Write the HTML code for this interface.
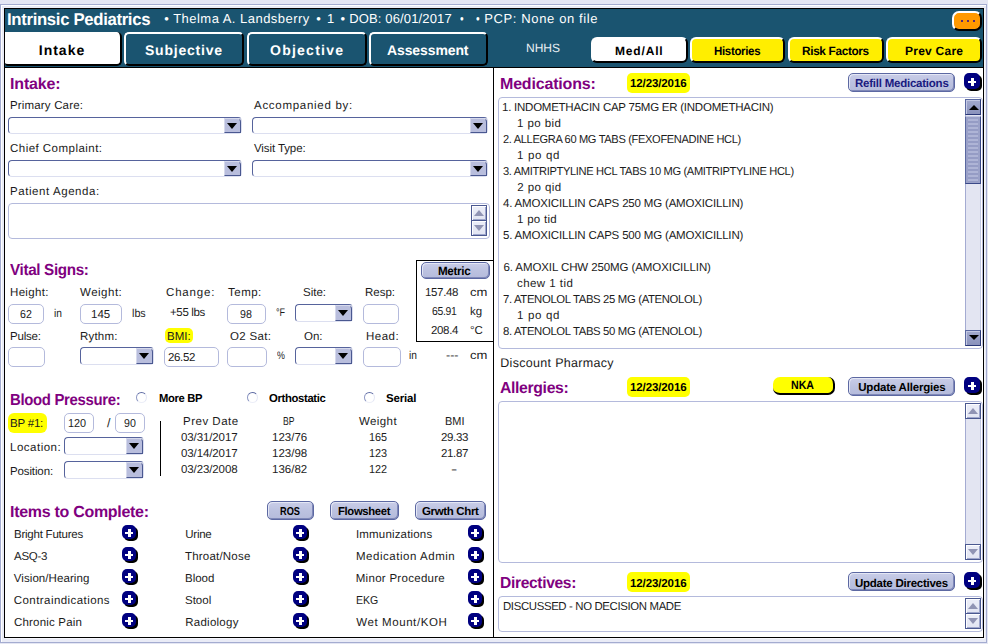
<!DOCTYPE html>
<html><head><meta charset="utf-8"><title>Intrinsic Pediatrics</title>
<style>
html,body{margin:0;padding:0}
body{width:988px;height:644px;overflow:hidden;position:relative;background:#e4e6f3;font-family:"Liberation Sans",sans-serif}
div,span,i,b{position:absolute;box-sizing:border-box;display:block}
.t{white-space:pre;line-height:20px;font-style:normal;text-rendering:geometricPrecision}
.outer{border:1px solid #a4acd0;background:#e9ebf6;box-shadow:inset 1px 1px 0 #fff}
.frame{border:1px solid #000;background:#fff;box-shadow:1px 1px 0 #f6f7fc}
.hdr{background:#1a5470}
.hl,.vl{background:#000}
.tab{border:2px solid;border-color:#fff #000 #000 #fff;border-radius:5px;background:#1a5470}
.tab.w{background:#fff}
.tab.y{background:#ffee00}
.org{border:2px solid;border-color:#fff #000 #000 #fff;border-radius:7px;background:#ff9900}
.org i{width:1.6px;height:1.6px;background:#5a2a70;top:7.2px}
.in{border:1px solid #b4badc;border-radius:5px;background:#fff}
.dd{border:1px solid;border-color:#56639c #dcdff0 #dcdff0 #56639c;border-radius:4px;background:#fff}
.dd b{right:0;top:0;bottom:0;width:17px;background:#b9bedd;border:1px solid;border-color:#d6d9ec #4a5890 #4a5890 #d6d9ec;border-top-right-radius:4px}
.dd b:after{content:"";position:absolute;left:1.6px;top:3.6px;width:0;height:0;border-left:5.8px solid transparent;border-right:5.8px solid transparent;border-top:6.2px solid #000}
.btn{border:1px solid #5c68a2;border-radius:5px;background:linear-gradient(#c9cde8,#bcc2e0 50%,#b5bbdb);box-shadow:inset 1px 1px 0 #e4e7f5,inset -1px -1px 0 #7f88b8}
.plus{border-radius:5px;background:#000080;box-shadow:2px 2px 0 #000}
.plus:before{content:"";position:absolute;left:calc(50% - 4px);top:calc(50% - 0.3px);width:8.4px;height:2.6px;background:#fff}
.plus:after{content:"";position:absolute;left:calc(50% - 1.3px);top:calc(50% - 3px);width:3px;height:8px;background:#fff}
.pill{background:#ffff00;border-radius:5px}
.nka{background:#ffff00;border-radius:7px;border:solid #000;border-width:0 2px 2px 0}
.lb{border:1px solid #b4badc;border-radius:4px;background:#fff}
.trk{background:#e3e5f2;border-left:1px solid #a4abd2;border-right:1px solid #c4c9e4}
.sbtn{border:1px solid #4a5890;background:linear-gradient(#eceef8,#e1e4f2);box-shadow:inset 1px 1px 0 #fdfdff,inset -1px -1px 0 #9ea6cc}
.sbtn.a{background:linear-gradient(#a3aace,#8a92bc);box-shadow:inset 1px 1px 0 #c4c9e4;border-color:#5a68a0 #2a3878 #2a3878 #5a68a0;border-bottom-width:1px}
.sbtn i{left:2px;width:0;height:0;border-left:5.5px solid transparent;border-right:5.5px solid transparent}
.up i{top:4px;border-bottom:6px solid #9094b4}
.dn i{top:4px;border-top:6px solid #9094b4}
.a.up i{border-bottom-color:#000;left:2.5px;top:4.5px;border-left-width:5px;border-right-width:5px;border-bottom-width:5.5px}
.a.dn i{border-top-color:#000;left:2.5px;border-left-width:5px;border-right-width:5px;border-top-width:5.5px;top:4px}
.thumb{border:1px solid;border-color:#c0c5e2 #3a4888 #3a4888 #5a68a0;background:#9aa1c8}
.thumb i{left:2px;right:2px;top:2px;bottom:1px;background:repeating-linear-gradient(#aeb4d6 0,#aeb4d6 2px,#959cc5 2px,#959cc5 4px)}
.radio{border-radius:50%;border:1.4px solid;border-color:#5f6ca4 #e4e7f5 #eceef8 #8f99c4;background:#fff}
.mbox{border:1px solid #000;border-right:none;background:#fff}
</style></head>
<body>
<div class="outer" style="left:0px;top:4px;width:987px;height:639px;"></div>
<div class="frame" style="left:4px;top:8px;width:980px;height:630px;"></div>
<div class="hdr" style="left:5px;top:9px;width:978px;height:58px;"></div>
<div class="hl" style="left:5px;top:67px;width:978px;height:1px;"></div>
<div class="vl" style="left:493px;top:67px;width:1px;height:570px;"></div>
<div class="tab w" style="left:5px;top:32px;width:117px;height:34px;border-left:none;border-top:none;border-radius:0 5px 5px 3px"></div>
<div class="tab" style="left:124px;top:32px;width:120px;height:34px;"></div>
<div class="tab" style="left:247px;top:32px;width:120px;height:34px;"></div>
<div class="tab" style="left:369px;top:32px;width:119px;height:34px;"></div>
<div class="tab w" style="left:591px;top:37px;width:97px;height:26px;border-radius:6px"></div>
<div class="tab y" style="left:690px;top:37px;width:95px;height:26px;border-radius:6px"></div>
<div class="tab y" style="left:787.5px;top:37px;width:96px;height:26px;border-radius:6px"></div>
<div class="tab y" style="left:886px;top:37px;width:96px;height:26px;border-radius:6px"></div>
<div class="org" style="left:952px;top:11px;width:30px;height:20px;"><i style="left:7px"></i><i style="left:13px"></i><i style="left:19px"></i></div>
<div class="dd" style="left:8px;top:117px;width:234px;height:17px;"><b></b></div>
<div class="dd" style="left:8px;top:160px;width:234px;height:17px;"><b></b></div>
<div class="dd" style="left:252px;top:117px;width:236px;height:17px;"><b></b></div>
<div class="dd" style="left:252px;top:160px;width:236px;height:17px;"><b></b></div>
<div class="lb" style="left:8px;top:203px;width:482px;height:36px;"></div>
<div class="sbtn up" style="left:471px;top:205px;width:16px;height:15.5px;"><i></i></div>
<div class="sbtn dn" style="left:471px;top:220.5px;width:16px;height:15.5px;border-top:none"><i></i></div>
<div class="in" style="left:8px;top:304px;width:36px;height:20px;"></div>
<div class="in" style="left:80px;top:304px;width:42px;height:20px;"></div>
<div class="in" style="left:227px;top:304px;width:39px;height:20px;"></div>
<div class="dd" style="left:295px;top:304px;width:58px;height:18px;"><b></b></div>
<div class="in" style="left:363px;top:304px;width:36px;height:20px;"></div>
<div class="mbox" style="left:416px;top:260px;width:77px;height:82px;"></div>
<div class="btn" style="left:421px;top:262px;width:69px;height:17px;"></div>
<div class="pill" style="left:165px;top:328px;width:28px;height:15px;"></div>
<div class="in" style="left:8px;top:347px;width:37px;height:20px;"></div>
<div class="dd" style="left:80px;top:347px;width:74px;height:18px;"><b></b></div>
<div class="in" style="left:164px;top:347px;width:55px;height:20px;"></div>
<div class="in" style="left:227px;top:347px;width:40px;height:20px;"></div>
<div class="dd" style="left:295px;top:347px;width:58px;height:18px;"><b></b></div>
<div class="in" style="left:363px;top:347px;width:38px;height:20px;"></div>
<div class="radio" style="left:136px;top:392px;width:11px;height:11px;"></div>
<div class="radio" style="left:247px;top:392px;width:11px;height:11px;"></div>
<div class="radio" style="left:364px;top:392px;width:11px;height:11px;"></div>
<div class="pill" style="left:8px;top:413px;width:39px;height:20px;border-radius:6px"></div>
<div class="in" style="left:64px;top:413px;width:30px;height:20px;"></div>
<div class="in" style="left:115px;top:413px;width:30px;height:20px;"></div>
<div class="dd" style="left:64px;top:437px;width:80px;height:18px;"><b></b></div>
<div class="dd" style="left:64px;top:461px;width:80px;height:18px;"><b></b></div>
<div class="" style="left:160px;top:421px;width:1px;height:55px;background:#000"></div>
<div class="btn" style="left:267px;top:501px;width:47px;height:19px;"></div>
<div class="btn" style="left:330px;top:501px;width:69px;height:19px;"></div>
<div class="btn" style="left:415px;top:501px;width:71px;height:19px;"></div>
<div class="plus" style="left:122px;top:525px;width:14px;height:14px;"></div>
<div class="plus" style="left:293px;top:525px;width:14px;height:14px;"></div>
<div class="plus" style="left:468px;top:525px;width:14px;height:14px;"></div>
<div class="plus" style="left:122px;top:547px;width:14px;height:14px;"></div>
<div class="plus" style="left:293px;top:547px;width:14px;height:14px;"></div>
<div class="plus" style="left:468px;top:547px;width:14px;height:14px;"></div>
<div class="plus" style="left:122px;top:569px;width:14px;height:14px;"></div>
<div class="plus" style="left:293px;top:569px;width:14px;height:14px;"></div>
<div class="plus" style="left:468px;top:569px;width:14px;height:14px;"></div>
<div class="plus" style="left:122px;top:591px;width:14px;height:14px;"></div>
<div class="plus" style="left:293px;top:591px;width:14px;height:14px;"></div>
<div class="plus" style="left:468px;top:591px;width:14px;height:14px;"></div>
<div class="plus" style="left:122px;top:613px;width:14px;height:14px;"></div>
<div class="plus" style="left:293px;top:613px;width:14px;height:14px;"></div>
<div class="plus" style="left:468px;top:613px;width:14px;height:14px;"></div>
<div class="pill" style="left:627px;top:73px;width:63px;height:20px;"></div>
<div class="btn" style="left:848px;top:73px;width:107px;height:19px;"></div>
<div class="plus" style="left:964px;top:73px;width:16px;height:16px;"></div>
<div class="pill" style="left:627px;top:377px;width:63px;height:20px;"></div>
<div class="btn" style="left:848px;top:377px;width:107px;height:19px;"></div>
<div class="plus" style="left:964px;top:377px;width:16px;height:16px;"></div>
<div class="pill" style="left:627px;top:572px;width:63px;height:20px;"></div>
<div class="btn" style="left:848px;top:572px;width:107px;height:19px;"></div>
<div class="plus" style="left:964px;top:572px;width:16px;height:16px;"></div>
<div class="nka" style="left:773px;top:377px;width:62px;height:18px;"></div>
<div class="lb" style="left:498px;top:97px;width:485px;height:252px;"></div>
<div class="trk" style="left:965px;top:99px;width:16px;height:247px;"></div>
<div class="sbtn up a" style="left:965px;top:99px;width:16px;height:16px;"><i></i></div>
<div class="sbtn dn a" style="left:965px;top:330px;width:16px;height:16px;"><i></i></div>
<div class="thumb" style="left:965px;top:116px;width:16px;height:68px;"><i></i></div>
<div class="lb" style="left:498px;top:401px;width:485px;height:162px;"></div>
<div class="trk" style="left:965px;top:403px;width:16px;height:157px;"></div>
<div class="sbtn up" style="left:965px;top:403px;width:16px;height:16px;"><i></i></div>
<div class="sbtn dn" style="left:965px;top:544px;width:16px;height:16px;"><i></i></div>
<div class="lb" style="left:498px;top:596px;width:485px;height:36px;"></div>
<div class="sbtn up" style="left:965px;top:598px;width:16px;height:15.5px;"><i></i></div>
<div class="sbtn dn" style="left:965px;top:613.5px;width:16px;height:15.5px;border-top:none"><i></i></div>

<span class="t" id="t0" style="left:7.00px;top:10.11px;font-size:17px;color:#fff;font-weight:bold;letter-spacing:-0.350px;transform:scaleX(0.9862);transform-origin:0 0;">Intrinsic Pediatrics</span>
<span class="t" id="t1" style="left:164.25px;top:8.50px;font-size:13px;color:#fff;letter-spacing:0.476px;">• Thelma A. Landsberry</span>
<span class="t" id="t2" style="left:316.25px;top:8.50px;font-size:13px;color:#fff;letter-spacing:1.300px;">• 1 •</span>
<span class="t" id="t3" style="left:349.25px;top:8.50px;font-size:13px;color:#fff;letter-spacing:0.143px;">DOB: 06/01/2017</span>
<span class="t" id="t4" style="left:460.00px;top:8.50px;font-size:13px;color:#fff;letter-spacing:0.000px;transform:scaleX(0.8000);transform-origin:0 0;">•</span>
<span class="t" id="t5" style="left:476.00px;top:8.50px;font-size:13px;color:#fff;letter-spacing:0.000px;transform:scaleX(0.8000);transform-origin:0 0;">•</span>
<span class="t" id="t6" style="left:484.25px;top:8.50px;font-size:13px;color:#fff;letter-spacing:0.625px;">PCP: None on file</span>
<span class="t" id="t7" style="left:38.75px;top:40.15px;font-size:14px;color:#000;font-weight:bold;letter-spacing:1.000px;">Intake</span>
<span class="t" id="t8" style="left:145.00px;top:40.15px;font-size:14px;color:#fff;font-weight:bold;letter-spacing:0.778px;">Subjective</span>
<span class="t" id="t9" style="left:270.00px;top:40.15px;font-size:14px;color:#fff;font-weight:bold;letter-spacing:1.250px;">Objective</span>
<span class="t" id="t10" style="left:387.00px;top:40.15px;font-size:14px;color:#fff;font-weight:bold;letter-spacing:-0.111px;">Assessment</span>
<span class="t" id="t11" style="left:526.00px;top:37.84px;font-size:12px;color:#e9eff3;letter-spacing:0.000px;">NHHS</span>
<span class="t" id="t12" style="left:615.00px;top:40.84px;font-size:12px;color:#000;font-weight:bold;letter-spacing:0.833px;">Med/All</span>
<span class="t" id="t13" style="left:714.00px;top:40.84px;font-size:12px;color:#000;font-weight:bold;letter-spacing:-0.350px;transform:scaleX(0.9592);transform-origin:0 0;">Histories</span>
<span class="t" id="t14" style="left:802.00px;top:40.84px;font-size:12px;color:#000;font-weight:bold;letter-spacing:-0.350px;transform:scaleX(0.9853);transform-origin:0 0;">Risk Factors</span>
<span class="t" id="t15" style="left:905.00px;top:40.84px;font-size:12px;color:#000;font-weight:bold;letter-spacing:0.250px;">Prev Care</span>
<span class="t" id="t16" style="left:10.00px;top:75.46px;font-size:16px;color:#800080;font-weight:bold;letter-spacing:-0.167px;">Intake:</span>
<span class="t" id="t17" style="left:10.00px;top:96.02px;font-size:11.5px;color:#1c1c1c;letter-spacing:0.167px;">Primary Care:</span>
<span class="t" id="t18" style="left:254.00px;top:96.02px;font-size:11.5px;color:#1c1c1c;letter-spacing:0.714px;">Accompanied by:</span>
<span class="t" id="t19" style="left:10.00px;top:139.02px;font-size:11.5px;color:#1c1c1c;letter-spacing:0.467px;">Chief Complaint:</span>
<span class="t" id="t20" style="left:254.00px;top:139.02px;font-size:11.5px;color:#1c1c1c;letter-spacing:-0.100px;">Visit Type:</span>
<span class="t" id="t21" style="left:10.00px;top:182.02px;font-size:11.5px;color:#1c1c1c;letter-spacing:0.571px;">Patient Agenda:</span>
<span class="t" id="t22" style="left:10.00px;top:261.46px;font-size:16px;color:#800080;font-weight:bold;letter-spacing:-0.350px;transform:scaleX(0.9512);transform-origin:0 0;">Vital Signs:</span>
<span class="t" id="t23" style="left:10.00px;top:283.02px;font-size:11.5px;color:#1c1c1c;letter-spacing:0.333px;">Height:</span>
<span class="t" id="t24" style="left:80.00px;top:283.02px;font-size:11.5px;color:#1c1c1c;letter-spacing:0.500px;">Weight:</span>
<span class="t" id="t25" style="left:166.00px;top:283.02px;font-size:11.5px;color:#1c1c1c;letter-spacing:0.833px;">Change:</span>
<span class="t" id="t26" style="left:228.00px;top:283.02px;font-size:11.5px;color:#1c1c1c;letter-spacing:0.500px;">Temp:</span>
<span class="t" id="t27" style="left:303.00px;top:283.02px;font-size:11.5px;color:#1c1c1c;letter-spacing:0.000px;">Site:</span>
<span class="t" id="t28" style="left:365.00px;top:283.02px;font-size:11.5px;color:#1c1c1c;letter-spacing:0.000px;">Resp:</span>
<span class="t" id="t29" style="left:20.00px;top:305.02px;font-size:11.5px;color:#1c1c1c;letter-spacing:0.000px;transform:scaleX(0.9231);transform-origin:0 0;">62</span>
<span class="t" id="t30" style="left:54.00px;top:304.02px;font-size:11.5px;color:#1c1c1c;letter-spacing:0.000px;transform:scaleX(0.8889);transform-origin:0 0;">in</span>
<span class="t" id="t31" style="left:91.00px;top:305.02px;font-size:11.5px;color:#1c1c1c;letter-spacing:0.000px;">145</span>
<span class="t" id="t32" style="left:132.00px;top:304.02px;font-size:11.5px;color:#1c1c1c;letter-spacing:0.000px;transform:scaleX(0.9333);transform-origin:0 0;">lbs</span>
<span class="t" id="t33" style="left:170.00px;top:302.52px;font-size:11.5px;color:#1c1c1c;letter-spacing:-0.350px;">+55 lbs</span>
<span class="t" id="t34" style="left:240.25px;top:305.02px;font-size:11.5px;color:#1c1c1c;letter-spacing:0.000px;transform:scaleX(0.9275);transform-origin:0 0;">98</span>
<span class="t" id="t35" style="left:276.00px;top:303.19px;font-size:11px;color:#1c1c1c;letter-spacing:0.000px;transform:scaleX(0.8182);transform-origin:0 0;">°F</span>
<span class="t" id="t36" style="left:438.00px;top:260.84px;font-size:12px;color:#000;font-weight:bold;letter-spacing:-0.350px;transform:scaleX(0.9706);transform-origin:0 0;">Metric</span>
<span class="t" id="t37" style="left:425.00px;top:283.02px;font-size:11.5px;color:#1c1c1c;letter-spacing:-0.350px;">157.48</span>
<span class="t" id="t38" style="left:470.00px;top:283.02px;font-size:11.5px;color:#1c1c1c;letter-spacing:0.000px;transform:scaleX(1.1333);transform-origin:0 0;">cm</span>
<span class="t" id="t39" style="left:431.75px;top:302.02px;font-size:11.5px;color:#1c1c1c;letter-spacing:-0.350px;transform:scaleX(0.9082);transform-origin:0 0;">65.91</span>
<span class="t" id="t40" style="left:470.00px;top:302.02px;font-size:11.5px;color:#1c1c1c;letter-spacing:0.000px;">kg</span>
<span class="t" id="t41" style="left:431.00px;top:321.02px;font-size:11.5px;color:#1c1c1c;letter-spacing:-0.350px;">208.4</span>
<span class="t" id="t42" style="left:470.00px;top:321.02px;font-size:11.5px;color:#1c1c1c;letter-spacing:0.000px;">°C</span>
<span class="t" id="t43" style="left:10.00px;top:327.02px;font-size:11.5px;color:#1c1c1c;letter-spacing:-0.200px;">Pulse:</span>
<span class="t" id="t44" style="left:80.00px;top:327.02px;font-size:11.5px;color:#1c1c1c;letter-spacing:0.200px;">Rythm:</span>
<span class="t" id="t45" style="left:167.00px;top:327.02px;font-size:11.5px;color:#1c1c1c;letter-spacing:0.000px;">BMI:</span>
<span class="t" id="t46" style="left:230.00px;top:327.02px;font-size:11.5px;color:#1c1c1c;letter-spacing:0.333px;">O2 Sat:</span>
<span class="t" id="t47" style="left:304.00px;top:327.02px;font-size:11.5px;color:#1c1c1c;letter-spacing:0.000px;">On:</span>
<span class="t" id="t48" style="left:366.00px;top:327.02px;font-size:11.5px;color:#1c1c1c;letter-spacing:0.500px;">Head:</span>
<span class="t" id="t49" style="left:168.00px;top:348.02px;font-size:11.5px;color:#1c1c1c;letter-spacing:-0.350px;">26.52</span>
<span class="t" id="t50" style="left:277.25px;top:346.19px;font-size:11px;color:#1c1c1c;letter-spacing:0.000px;transform:scaleX(0.8084);transform-origin:0 0;">%</span>
<span class="t" id="t51" style="left:409.00px;top:346.02px;font-size:11.5px;color:#1c1c1c;letter-spacing:0.000px;transform:scaleX(0.8889);transform-origin:0 0;">in</span>
<span class="t" id="t52" style="left:446.00px;top:346.02px;font-size:11.5px;color:#1c1c1c;letter-spacing:0.000px;transform:scaleX(1.0909);transform-origin:0 0;">---</span>
<span class="t" id="t53" style="left:470.00px;top:346.02px;font-size:11.5px;color:#1c1c1c;letter-spacing:0.000px;transform:scaleX(1.1333);transform-origin:0 0;">cm</span>
<span class="t" id="t54" style="left:10.00px;top:391.46px;font-size:16px;color:#800080;font-weight:bold;letter-spacing:-0.350px;transform:scaleX(0.9322);transform-origin:0 0;">Blood Pressure:</span>
<span class="t" id="t55" style="left:159.00px;top:388.52px;font-size:11.5px;color:#000;font-weight:bold;letter-spacing:-0.350px;transform:scaleX(0.9778);transform-origin:0 0;">More BP</span>
<span class="t" id="t56" style="left:269.00px;top:388.52px;font-size:11.5px;color:#000;font-weight:bold;letter-spacing:-0.350px;transform:scaleX(0.9828);transform-origin:0 0;">Orthostatic</span>
<span class="t" id="t57" style="left:386.00px;top:388.52px;font-size:11.5px;color:#000;font-weight:bold;letter-spacing:-0.200px;">Serial</span>
<span class="t" id="t58" style="left:10.00px;top:414.02px;font-size:11.5px;color:#1c1c1c;letter-spacing:-0.200px;">BP #1:</span>
<span class="t" id="t59" style="left:68.00px;top:414.02px;font-size:11.5px;color:#1c1c1c;letter-spacing:0.000px;transform:scaleX(0.9444);transform-origin:0 0;">120</span>
<span class="t" id="t60" style="left:107.00px;top:412.67px;font-size:12.5px;color:#1c1c1c;letter-spacing:0.000px;">/</span>
<span class="t" id="t61" style="left:124.00px;top:414.02px;font-size:11.5px;color:#1c1c1c;letter-spacing:0.000px;transform:scaleX(0.9231);transform-origin:0 0;">90</span>
<span class="t" id="t62" style="left:10.00px;top:438.02px;font-size:11.5px;color:#1c1c1c;letter-spacing:0.500px;">Location:</span>
<span class="t" id="t63" style="left:10.00px;top:462.02px;font-size:11.5px;color:#1c1c1c;letter-spacing:-0.125px;">Position:</span>
<span class="t" id="t64" style="left:183.00px;top:412.02px;font-size:11.5px;color:#1c1c1c;letter-spacing:0.500px;">Prev Date</span>
<span class="t" id="t65" style="left:282.85px;top:412.02px;font-size:11.5px;color:#1c1c1c;letter-spacing:0.000px;transform:scaleX(0.7497);transform-origin:0 0;">BP</span>
<span class="t" id="t66" style="left:359.00px;top:412.02px;font-size:11.5px;color:#1c1c1c;letter-spacing:0.400px;">Weight</span>
<span class="t" id="t67" style="left:445.00px;top:412.02px;font-size:11.5px;color:#1c1c1c;letter-spacing:0.000px;transform:scaleX(0.9500);transform-origin:0 0;">BMI</span>
<span class="t" id="t68" style="left:181.00px;top:428.02px;font-size:11.5px;color:#1c1c1c;letter-spacing:-0.111px;">03/31/2017</span>
<span class="t" id="t69" style="left:272.00px;top:428.02px;font-size:11.5px;color:#1c1c1c;letter-spacing:0.000px;">123/76</span>
<span class="t" id="t70" style="left:369.00px;top:428.02px;font-size:11.5px;color:#1c1c1c;letter-spacing:0.000px;transform:scaleX(0.9444);transform-origin:0 0;">165</span>
<span class="t" id="t71" style="left:441.00px;top:428.02px;font-size:11.5px;color:#1c1c1c;letter-spacing:-0.350px;">29.33</span>
<span class="t" id="t72" style="left:181.00px;top:444.02px;font-size:11.5px;color:#1c1c1c;letter-spacing:-0.111px;">03/14/2017</span>
<span class="t" id="t73" style="left:272.00px;top:444.02px;font-size:11.5px;color:#1c1c1c;letter-spacing:0.000px;">123/98</span>
<span class="t" id="t74" style="left:369.00px;top:444.02px;font-size:11.5px;color:#1c1c1c;letter-spacing:0.000px;transform:scaleX(0.9444);transform-origin:0 0;">123</span>
<span class="t" id="t75" style="left:441.00px;top:444.02px;font-size:11.5px;color:#1c1c1c;letter-spacing:-0.350px;">21.87</span>
<span class="t" id="t76" style="left:181.00px;top:460.02px;font-size:11.5px;color:#1c1c1c;letter-spacing:-0.111px;">03/23/2008</span>
<span class="t" id="t77" style="left:272.00px;top:460.02px;font-size:11.5px;color:#1c1c1c;letter-spacing:0.000px;">136/82</span>
<span class="t" id="t78" style="left:369.00px;top:460.02px;font-size:11.5px;color:#1c1c1c;letter-spacing:0.000px;transform:scaleX(0.9444);transform-origin:0 0;">122</span>
<span class="t" id="t79" style="left:451.00px;top:460.02px;font-size:11.5px;color:#1c1c1c;letter-spacing:0.000px;transform:scaleX(1.6276);transform-origin:0 0;">-</span>
<span class="t" id="t80" style="left:10.00px;top:502.96px;font-size:16px;color:#800080;font-weight:bold;letter-spacing:-0.294px;">Items to Complete:</span>
<span class="t" id="t81" style="left:280.00px;top:501.52px;font-size:11.5px;color:#000;font-weight:bold;letter-spacing:0.000px;transform:scaleX(0.8000);transform-origin:0 0;">ROS</span>
<span class="t" id="t82" style="left:338.00px;top:501.52px;font-size:11.5px;color:#000;font-weight:bold;letter-spacing:-0.350px;transform:scaleX(0.9815);transform-origin:0 0;">Flowsheet</span>
<span class="t" id="t83" style="left:422.00px;top:501.52px;font-size:11.5px;color:#000;font-weight:bold;letter-spacing:-0.350px;">Grwth Chrt</span>
<span class="t" id="t84" style="left:14.00px;top:524.52px;font-size:11.5px;color:#1c1c1c;letter-spacing:-0.231px;">Bright Futures</span>
<span class="t" id="t85" style="left:185.25px;top:524.52px;font-size:11.5px;color:#1c1c1c;letter-spacing:-0.250px;">Urine</span>
<span class="t" id="t86" style="left:356.00px;top:524.52px;font-size:11.5px;color:#1c1c1c;letter-spacing:0.167px;">Immunizations</span>
<span class="t" id="t87" style="left:14.00px;top:546.52px;font-size:11.5px;color:#1c1c1c;letter-spacing:-0.250px;">ASQ-3</span>
<span class="t" id="t88" style="left:185.00px;top:546.52px;font-size:11.5px;color:#1c1c1c;letter-spacing:0.200px;">Throat/Nose</span>
<span class="t" id="t89" style="left:356.00px;top:546.52px;font-size:11.5px;color:#1c1c1c;letter-spacing:0.533px;">Medication Admin</span>
<span class="t" id="t90" style="left:13.75px;top:568.52px;font-size:11.5px;color:#1c1c1c;letter-spacing:0.077px;">Vision/Hearing</span>
<span class="t" id="t91" style="left:185.00px;top:568.52px;font-size:11.5px;color:#1c1c1c;letter-spacing:0.000px;">Blood</span>
<span class="t" id="t92" style="left:355.75px;top:568.52px;font-size:11.5px;color:#1c1c1c;letter-spacing:0.286px;">Minor Procedure</span>
<span class="t" id="t93" style="left:13.75px;top:590.52px;font-size:11.5px;color:#1c1c1c;letter-spacing:0.438px;">Contraindications</span>
<span class="t" id="t94" style="left:185.00px;top:590.52px;font-size:11.5px;color:#1c1c1c;letter-spacing:0.000px;">Stool</span>
<span class="t" id="t95" style="left:356.25px;top:590.52px;font-size:11.5px;color:#1c1c1c;letter-spacing:0.000px;transform:scaleX(0.9180);transform-origin:0 0;">EKG</span>
<span class="t" id="t96" style="left:14.00px;top:612.52px;font-size:11.5px;color:#1c1c1c;letter-spacing:0.182px;">Chronic Pain</span>
<span class="t" id="t97" style="left:185.25px;top:612.52px;font-size:11.5px;color:#1c1c1c;letter-spacing:0.250px;">Radiology</span>
<span class="t" id="t98" style="left:356.25px;top:612.52px;font-size:11.5px;color:#1c1c1c;letter-spacing:0.583px;">Wet Mount/KOH</span>
<span class="t" id="t99" style="left:500.00px;top:75.46px;font-size:16px;color:#800080;font-weight:bold;letter-spacing:-0.182px;">Medications:</span>
<span class="t" id="t100" style="left:500.00px;top:379.46px;font-size:16px;color:#800080;font-weight:bold;letter-spacing:-0.350px;transform:scaleX(0.9855);transform-origin:0 0;">Allergies:</span>
<span class="t" id="t101" style="left:500.00px;top:574.46px;font-size:16px;color:#800080;font-weight:bold;letter-spacing:-0.350px;transform:scaleX(0.9745);transform-origin:0 0;">Directives:</span>
<span class="t" id="t102" style="left:630.00px;top:74.02px;font-size:11.5px;color:#000;font-weight:bold;letter-spacing:-0.111px;">12/23/2016</span>
<span class="t" id="t103" style="left:630.00px;top:378.02px;font-size:11.5px;color:#000;font-weight:bold;letter-spacing:-0.111px;">12/23/2016</span>
<span class="t" id="t104" style="left:630.00px;top:573.52px;font-size:11.5px;color:#000;font-weight:bold;letter-spacing:-0.111px;">12/23/2016</span>
<span class="t" id="t105" style="left:855.00px;top:74.02px;font-size:11.5px;color:#1a1a80;font-weight:bold;letter-spacing:-0.235px;">Refill Medications</span>
<span class="t" id="t106" style="left:858.25px;top:378.02px;font-size:11.5px;color:#000;font-weight:bold;letter-spacing:-0.200px;">Update Allergies</span>
<span class="t" id="t107" style="left:855.00px;top:573.52px;font-size:11.5px;color:#000;font-weight:bold;letter-spacing:-0.250px;">Update Directives</span>
<span class="t" id="t108" style="left:791.00px;top:374.84px;font-size:12px;color:#000;font-weight:bold;letter-spacing:0.000px;transform:scaleX(0.8846);transform-origin:0 0;">NKA</span>
<span class="t" id="t109" style="left:500.25px;top:352.67px;font-size:12.5px;color:#1c1c1c;letter-spacing:0.312px;">Discount Pharmacy</span>
<span class="t" id="t110" style="left:503.00px;top:597.02px;font-size:11.5px;color:#1c1c1c;letter-spacing:-0.350px;transform:scaleX(0.9889);transform-origin:0 0;">DISCUSSED - NO DECISION MADE</span>
<span class="t" id="t111" style="left:502.00px;top:98.02px;font-size:11.5px;color:#1c1c1c;letter-spacing:-0.244px;">1. INDOMETHACIN CAP 75MG ER (INDOMETHACIN)</span>
<span class="t" id="t112" style="left:517.00px;top:114.02px;font-size:11.5px;color:#1c1c1c;letter-spacing:0.429px;">1 po bid</span>
<span class="t" id="t113" style="left:503.00px;top:130.02px;font-size:11.5px;color:#1c1c1c;letter-spacing:-0.350px;transform:scaleX(0.9636);transform-origin:0 0;">2. ALLEGRA 60 MG TABS (FEXOFENADINE HCL)</span>
<span class="t" id="t114" style="left:517.00px;top:146.02px;font-size:11.5px;color:#1c1c1c;letter-spacing:0.667px;">1 po qd</span>
<span class="t" id="t115" style="left:503.00px;top:162.02px;font-size:11.5px;color:#1c1c1c;letter-spacing:-0.350px;transform:scaleX(0.9668);transform-origin:0 0;">3. AMITRIPTYLINE HCL TABS 10 MG (AMITRIPTYLINE HCL)</span>
<span class="t" id="t116" style="left:517.25px;top:178.02px;font-size:11.5px;color:#1c1c1c;letter-spacing:0.429px;">2 po qid</span>
<span class="t" id="t117" style="left:503.00px;top:194.02px;font-size:11.5px;color:#1c1c1c;letter-spacing:-0.179px;">4. AMOXICILLIN CAPS 250 MG (AMOXICILLIN)</span>
<span class="t" id="t118" style="left:517.00px;top:210.02px;font-size:11.5px;color:#1c1c1c;letter-spacing:0.286px;">1 po tid</span>
<span class="t" id="t119" style="left:503.00px;top:226.02px;font-size:11.5px;color:#1c1c1c;letter-spacing:-0.179px;">5. AMOXICILLIN CAPS 500 MG (AMOXICILLIN)</span>
<span class="t" id="t120" style="left:503.50px;top:258.02px;font-size:11.5px;color:#1c1c1c;letter-spacing:-0.094px;">6. AMOXIL CHW 250MG (AMOXICILLIN)</span>
<span class="t" id="t121" style="left:517.00px;top:274.02px;font-size:11.5px;color:#1c1c1c;letter-spacing:0.444px;">chew 1 tid</span>
<span class="t" id="t122" style="left:503.00px;top:290.02px;font-size:11.5px;color:#1c1c1c;letter-spacing:-0.350px;transform:scaleX(0.9851);transform-origin:0 0;">7. ATENOLOL TABS 25 MG (ATENOLOL)</span>
<span class="t" id="t123" style="left:517.00px;top:306.02px;font-size:11.5px;color:#1c1c1c;letter-spacing:0.667px;">1 po qd</span>
<span class="t" id="t124" style="left:503.00px;top:322.02px;font-size:11.5px;color:#1c1c1c;letter-spacing:-0.350px;transform:scaleX(0.9851);transform-origin:0 0;">8. ATENOLOL TABS 50 MG (ATENOLOL)</span>
</body></html>
